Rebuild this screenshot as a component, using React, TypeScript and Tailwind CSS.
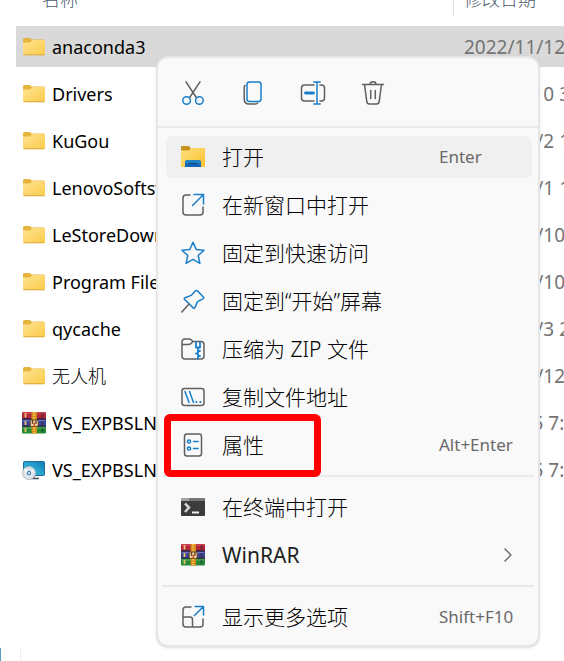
import type { ReactNode } from "react";

type Kind = "folder" | "rar" | "disc";

const files: { name: string; date: string; kind: Kind; selected?: boolean; cjk?: boolean }[] = [
  { name: "anaconda3", date: "2022/11/12 10:21", kind: "folder", selected: true },
  { name: "Drivers", date: "2022/9/10 3:12", kind: "folder" },
  { name: "KuGou", date: "2022/11/2 18:40", kind: "folder" },
  { name: "LenovoSoftstore", date: "2022/11/1 19:05", kind: "folder" },
  { name: "LeStoreDownload", date: "2022/11/10 9:30", kind: "folder" },
  { name: "Program Files", date: "2022/11/10 9:42", kind: "folder" },
  { name: "qycache", date: "2022/11/3 20:16", kind: "folder" },
  { name: "无人机", date: "2022/11/12 8:55", kind: "folder", cjk: true },
  { name: "VS_EXPBSLN", date: "2022/9/5 7:31", kind: "rar" },
  { name: "VS_EXPBSLN", date: "2022/9/5 7:48", kind: "disc" },
];

const BLUE = "#1a7fc9";
const GREY = "#5f5f5f";

function FolderIcon() {
  return (
    <svg width="24" height="20" viewBox="0 0 24 20" aria-hidden="true">
      <defs>
        <linearGradient id="folder" x1="0" y1="0" x2="1" y2="1">
          <stop offset="0" stopColor="#ffe493" />
          <stop offset="1" stopColor="#fbcb4a" />
        </linearGradient>
      </defs>
      <path d="M1 2.500Q1 1 2.500 1H8l1.500 1.500H21.500Q23 2.500 23 4v4H1z" fill="#e5b43c" />
      <path d="M1 5.500h7l2.500-2.500H22q1 0 1 1V17q0 1-1 1H2q-1 0-1-1z" fill="url(#folder)" />
      <path d="M1.500 17.800h21" stroke="#dba83a" strokeWidth="1" />
    </svg>
  );
}

function RarIcon() {
  return (
    <svg width="24" height="22" viewBox="0 0 24 22" aria-hidden="true">
      <rect x="0" y="0" width="24" height="7" rx="1" fill="#b3263a" />
      <rect x="0" y="7" width="24" height="7.500" fill="#3f4496" />
      <rect x="0" y="14.500" width="24" height="7" rx="1" fill="#248a35" />
      <path d="M0 6.800h24M0 14.200h24" stroke="#2b1b35" strokeWidth="1.200" />
      <path d="M1 1h22" stroke="#e2566a" strokeWidth="1" />
      <path d="M1 8.500h22" stroke="#7476c2" strokeWidth="1" />
      <path d="M1 16h22" stroke="#58b75a" strokeWidth="1" />
      <path d="M3.500 1v4.500M3.500 9v4M3.500 16v4" stroke="#e9c070" strokeWidth="1.800" />
      <path d="M20.500 1v4.500M20.500 9v4M20.500 16v4" stroke="#1e2233" strokeOpacity=".45" strokeWidth="2" />
      <rect x="9.500" y="0" width="5.500" height="21.500" fill="#d58a20" />
      <path d="M12.200 0v8M12.200 15v6.500" stroke="#f4c248" strokeWidth="2" strokeDasharray="1.500 1" />
      <rect x="8.200" y="8" width="8" height="6.500" rx="1.500" fill="#e8d5b8" stroke="#6c4518" strokeWidth="1" />
      <path d="M10.500 8v4M14 8v4" stroke="#6c4518" strokeWidth="1.300" />
      <rect x="11.500" y="10.500" width="1.600" height="4" fill="#c25b1b" />
    </svg>
  );
}

function DiscIcon() {
  return (
    <svg width="24" height="20" viewBox="0 0 24 20" aria-hidden="true">
      <defs>
        <linearGradient id="screen" x1="0" y1="1" x2="1" y2="0">
          <stop offset="0" stopColor="#40c4df" />
          <stop offset=".5" stopColor="#27a6d2" />
          <stop offset="1" stopColor="#1477b5" />
        </linearGradient>
      </defs>
      <rect x="1.500" y="1.500" width="21" height="14" rx="1" fill="url(#screen)" stroke="#1f6f9a" strokeWidth="1" />
      <path d="M12 16v2M9 18.500h8" stroke="#45525c" strokeWidth="1.400" />
      <circle cx="7" cy="13" r="6.500" fill="#dfe3ea" stroke="#aab3bf" strokeWidth=".8" />
      <path d="M7 13 2.500 9M7 13l5-3" stroke="#f8f8fb" strokeWidth="2" />
      <circle cx="7" cy="13" r="2.200" fill="#3b83ad" />
      <circle cx="7" cy="13" r="1" fill="#f5f8fb" />
    </svg>
  );
}

function Line({ children }: { children: ReactNode }) {
  return (
    <svg width="24" height="24" viewBox="0 0 24 24" fill="none" stroke={GREY} strokeWidth="1.500" strokeLinecap="round" strokeLinejoin="round" aria-hidden="true">
      {children}
    </svg>
  );
}

const CutIcon = () => (
  <Line>
    <path d="M5 .800 15.300 16.500M19 .800 8.700 16.500" />
    <circle cx="5.600" cy="19.500" r="3.800" stroke={BLUE} />
    <circle cx="18.400" cy="19.500" r="3.800" stroke={BLUE} />
  </Line>
);

const CopyIcon = () => (
  <Line>
    <path d="M4 4.500Q3.200 5 3.200 6.500V18q0 5 5 5h6q2 0 2.500-1" />
    <rect x="6" y="1" width="14" height="19.500" rx="2.500" stroke={BLUE} />
  </Line>
);

const RenameIcon = () => (
  <svg width="26" height="24" viewBox="0 0 26 24" fill="none" stroke={GREY} strokeWidth="1.500" strokeLinecap="round" aria-hidden="true">
    <path d="M14 4H4.500Q1.500 4 1.500 7v10q0 3 3 3H14M20 4h1.500q3 0 3 3v10q0 3-3 3H20" />
    <path d="M17 1v22M13.800 1h6.400M13.800 23h6.400" stroke={BLUE} />
    <path d="M5.500 12h8" stroke={BLUE} strokeWidth="2.800" />
  </svg>
);

const TrashIcon = () => (
  <Line>
    <path d="M1.500 3.500h21M3.500 3.500l2.300 17.200q.300 2.300 2.500 2.300h7.400q2.200 0 2.500-2.300l2.300-17.200M9 3.500Q9 .800 12 .800t3 2.700M9.700 9.500v8M14.300 9.500v8" />
  </Line>
);

const OpenIcon = () => (
  <svg width="24" height="22" viewBox="0 0 24 22" aria-hidden="true">
    <defs>
      <linearGradient id="open" x1="0" y1="0" x2="1" y2="1">
        <stop offset="0" stopColor="#ffe080" />
        <stop offset="1" stopColor="#f8c22d" />
      </linearGradient>
    </defs>
    <path d="M0 1q0-1 1-1h7l1.500 2H23q1 0 1 1v3H0z" fill="#c7951d" />
    <path d="M0 4.500h8l2-2.500h13q1 0 1 1v17q0 1-1 1H1q-1 0-1-1z" fill="url(#open)" />
    <path d="M4 21v-4.500q0-2.500 2.500-2.500h11q2.500 0 2.500 2.500V21z" fill="#1265b4" />
    <path d="M4 17.500v-1q0-2.500 2.500-2.500h11q2.500 0 2.500 2.500v1z" fill="#2382c5" />
    <path d="M8 17.500h8" stroke="#0c4d8e" strokeWidth="1.500" />
  </svg>
);

const NewWindowIcon = () => (
  <Line>
    <path d="M9 2H5Q2 2 2 5v14q0 3 3 3h14q3 0 3-3v-5" />
    <path d="M13 1.500h9.500v9.500M22 2 11.500 12.500" stroke={BLUE} />
  </Line>
);

const StarIcon = () => (
  <Line>
    <path d="M12 1.200 15.200 8.400l7.800.8-5.800 5.300 1.700 7.800L12 18.300l-6.900 4 1.700-7.800L1 9.200l7.800-.8z" stroke={BLUE} />
  </Line>
);

const PinIcon = () => (
  <Line>
    <path d="M14.200 2.100q1.200-1.200 2.500 0l5.500 5.600q1.200 1.300-.3 2.200l-5.400 2.700-2.600 6q-.6 1.300-1.700.3L3.700 10.500q-1-1.100.4-1.700l6.100-2.400z" stroke={BLUE} />
    <path d="M7.800 15.200.800 23" />
  </Line>
);

const ZipIcon = () => (
  <Line>
    <path d="M12 4.500h8q3 0 3 3V19q0 3-3 3H4q-3 0-3-3V5q0-3 3-3h4q1.500 0 2.500 1l1.500 1.500-2 2q-1 1-2.500 1H1" />
    <path d="M15 5.500v5h4v-5M17 10.500v11M17 14h2M15 16.500h2M17 19h2" stroke={BLUE} strokeWidth="1.800" />
  </Line>
);

const PathIcon = () => (
  <Line>
    <rect x="1" y="3.500" width="22" height="17" rx="2.500" />
    <path d="m4 6.500 4 11M8.500 6.500l4 11" stroke={BLUE} />
    <path d="M15.300 17h.2M19.300 17h.2" stroke={BLUE} strokeWidth="2" />
  </Line>
);

const PropertiesIcon = () => (
  <Line>
    <rect x="3.500" y="1" width="17" height="22" rx="2.500" />
    <circle cx="8" cy="8.500" r="1.600" stroke={BLUE} />
    <circle cx="8" cy="15.500" r="1.600" stroke={BLUE} />
    <path d="M12.500 8.500h4.500M12.500 15.500h4.500" stroke={BLUE} strokeWidth="1.600" />
  </Line>
);

const TerminalIcon = () => (
  <svg width="24" height="18" viewBox="0 0 24 18" aria-hidden="true">
    <rect width="24" height="18" rx="1" fill="#3c3c3c" />
    <path d="M1 0h22q1 0 1 1v2H0V1q0-1 1-1z" fill="#777" />
    <path d="M0 0h8v3H0z" fill="#a2a2a2" />
    <path d="m4 5.500 4 4-4 4.500" fill="none" stroke="#d3d3d3" strokeWidth="2.500" />
    <path d="M11 14.500h7" stroke="#f0f0f0" strokeWidth="2" />
  </svg>
);

const MoreIcon = () => (
  <Line>
    <path d="M10 2H5Q2 2 2 5v14q0 3 3 3h14q3 0 3-3v-5M2 12h7q2.500 0 2.500 2.500V22" />
    <path d="M14 1.500h8.500V10M22 2l-8.500 8.500" stroke={BLUE} />
  </Line>
);

function MenuItem({ icon, label, hint, active, boxed, submenu }: { icon: ReactNode; label: string; hint?: string; active?: boolean; boxed?: boolean; submenu?: boolean }) {
  return (
    <li role="none" className="relative">
      <button
        type="button"
        role="menuitem"
        className={`flex h-[42px] w-full items-center rounded-md pl-[15px] text-left text-[21px] leading-6 text-black ${active ? "bg-[#f0f0f0]" : ""}`}
      >
        <span className="flex w-6 shrink-0 justify-center">{icon}</span>
        <span className={`ml-[17px] flex-1 whitespace-nowrap ${submenu ? "font-normal text-[#1f1f1f]" : "font-light"}`}>{label}</span>
        {hint && <span className="w-[93px] shrink-0 whitespace-nowrap text-[17px] font-normal leading-6 text-[#696969]">{hint}</span>}
        {submenu && (
          <svg width="10" height="16" viewBox="0 0 10 16" fill="none" stroke="#666" strokeWidth="1.300" className="mr-[19px]" aria-hidden="true">
            <path d="m1.500 1.500 6.500 6.500-6.500 6.500" />
          </svg>
        )}
      </button>
      {boxed && <span className="pointer-events-none absolute -left-0.5 -top-2.5 h-[63px] w-[157px] rounded-md border-[7px] border-[#fe0000]" />}
    </li>
  );
}

function Tool({ label, children }: { label: string; children: ReactNode }) {
  return (
    <button type="button" aria-label={label} className="flex h-10 w-6 items-center justify-center">
      <span className="shrink-0">{children}</span>
    </button>
  );
}

const group = "flex flex-col gap-1.5 pl-2 pr-1.5";

export default function App() {
  return (
    <main className="relative flex min-h-screen flex-col overflow-hidden bg-white font-['Noto_Sans','Noto_Sans_CJK_SC',sans-serif] text-black">
      <div className="pl-4">
        <table className="w-full table-fixed border-separate border-spacing-0 text-left">
          <thead>
            <tr className="text-lg leading-none text-[#4a5a6e]">
              <th className="w-[437px] p-0 align-top font-light">
                <div className="flex h-4 items-end pb-2 pl-[26px]">名称</div>
              </th>
              <th className="h-[26px] p-0 align-top font-light">
                <div className="flex h-4 items-end border-l border-[#dedede] pb-2 pl-2.5">
                  <span className="whitespace-nowrap">修改日期</span>
                </div>
              </th>
            </tr>
          </thead>
          <tbody>
            {files.map((file, i) => (
              <tr key={i} className={file.selected ? "[&>td]:bg-[#d9d9d9]" : ""}>
                <td className="h-[47px] overflow-hidden border-b-[6px] border-white p-0">
                  <div className="flex items-center gap-1.5 pl-1.5 text-lg leading-6">
                    <span className="flex w-6 shrink-0 justify-center">
                      {file.kind === "folder" ? <FolderIcon /> : file.kind === "rar" ? <RarIcon /> : <DiscIcon />}
                    </span>
                    <span className={`w-[105px] overflow-hidden whitespace-nowrap ${file.cjk ? "font-light" : ""}`}>{file.name}</span>
                  </div>
                </td>
                <td className="overflow-hidden whitespace-nowrap border-b-[6px] border-white p-0 pl-[11px] text-[19px] leading-6 text-[#747474]">{file.date}</td>
              </tr>
            ))}
          </tbody>
        </table>
      </div>
      <div className="mt-auto flex h-[13px] w-[21px] border-r border-[#eeeeee]">
        <span className="w-px bg-[#5c9dc4]" />
      </div>

      <div className="absolute left-[156px] top-14 w-[384px] rounded-xl border-2 border-[#e6e6e6] bg-[#f9f9f9] pb-[7px] shadow-sm">
        <div role="toolbar" aria-label="文件操作" className="flex h-[68px] items-center gap-9 pt-px pl-[23px]">
          <Tool label="剪切"><CutIcon /></Tool>
          <Tool label="复制"><CopyIcon /></Tool>
          <Tool label="重命名"><RenameIcon /></Tool>
          <Tool label="删除"><TrashIcon /></Tool>
        </div>
        <div className="mb-2 h-0.5 bg-[#e9e9e9]" />
        <ul role="menu" className={group}>
          <MenuItem active icon={<OpenIcon />} label="打开" hint="Enter" />
          <MenuItem icon={<NewWindowIcon />} label="在新窗口中打开" />
          <MenuItem icon={<StarIcon />} label="固定到快速访问" />
          <MenuItem icon={<PinIcon />} label="固定到“开始”屏幕" />
          <MenuItem icon={<ZipIcon />} label="压缩为 ZIP 文件" />
          <MenuItem icon={<PathIcon />} label="复制文件地址" />
          <MenuItem boxed icon={<PropertiesIcon />} label="属性" hint="Alt+Enter" />
        </ul>
        <div className="mx-1 my-[9px] h-0.5 bg-[#e9e9e9]" />
        <ul role="menu" className={group}>
          <MenuItem icon={<TerminalIcon />} label="在终端中打开" />
          <MenuItem submenu icon={<RarIcon />} label="WinRAR" />
        </ul>
        <div className="mx-1 my-[9px] h-0.5 bg-[#e9e9e9]" />
        <ul role="menu" className={group}>
          <MenuItem icon={<MoreIcon />} label="显示更多选项" hint="Shift+F10" />
        </ul>
      </div>
    </main>
  );
}
